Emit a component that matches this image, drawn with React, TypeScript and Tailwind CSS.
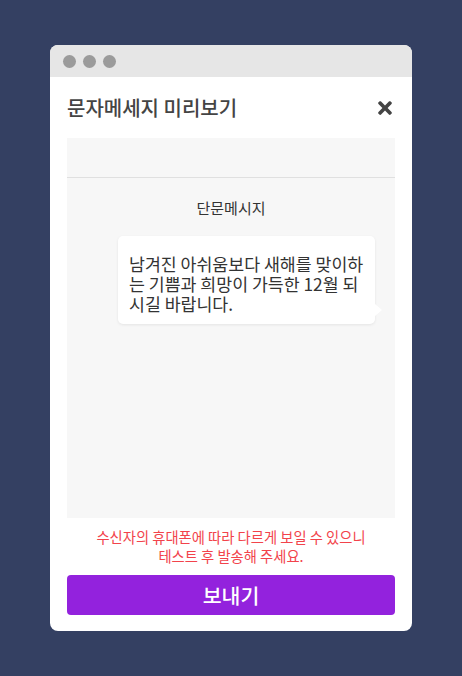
import { FaTimes } from "react-icons/fa";

const font = { fontFamily: '"Noto Sans CJK KR", "Noto Sans", sans-serif' };

export default function App() {
  return (
    <div className="min-h-screen w-full bg-[#344062] pt-[45px]" style={font}>
      <div className="mx-auto w-[362px] overflow-hidden rounded-[8px] bg-white">
        <div className="flex h-[32px] items-center gap-[7px] bg-[#e6e6e6] pl-[13px]">
          <span className="h-[13px] w-[13px] rounded-full bg-[#9b9b9b]" />
          <span className="h-[13px] w-[13px] rounded-full bg-[#9b9b9b]" />
          <span className="h-[13px] w-[13px] rounded-full bg-[#9b9b9b]" />
        </div>

        <div className="px-[17px] pb-[16px]">
          <div className="flex h-[61px] items-center justify-between">
            <h1 className="text-[20px] font-medium text-[#444]">문자메세지 미리보기</h1>
            <FaTimes className="h-[20px] w-[20px] text-[#444]" />
          </div>

          <div className="h-[380px] bg-[#f7f7f7]">
            <div className="h-[40px] border-b border-[#e0e0e0]" />
            <p className="pt-[19px] text-center text-[15px] leading-[22px] text-[#333]">단문메시지</p>
            <div className="mt-[17px] flex justify-end pr-[20px]">
              <div className="relative w-[257px] rounded-[5px] bg-white pb-[10px] pl-[11px] pr-[8px] pt-[18px] text-[17.3px] leading-[20px] text-[#333] shadow-[0_1px_3px_rgba(0,0,0,0.08)] [word-break:break-all]">
                남겨진 아쉬움보다 새해를 맞이하는 기쁨과 희망이 가득한 12월 되시길 바랍니다.
                <span className="absolute bottom-[8px] right-[-7px] h-0 w-0 border-y-[6px] border-l-[7px] border-y-transparent border-l-white" />
              </div>
            </div>
          </div>

          <p className="pt-[9px] text-center text-[14.3px] leading-[19px] text-[#f2434b]">
            수신자의 휴대폰에 따라 다르게 보일 수 있으니
            <br />
            테스트 후 발송해 주세요.
          </p>

          <button className="mt-[10px] flex h-[40px] w-full items-center justify-center rounded-[4px] bg-[#9322dd] text-[20.5px] font-medium text-white">
            보내기
          </button>
        </div>
      </div>
    </div>
  );
}
